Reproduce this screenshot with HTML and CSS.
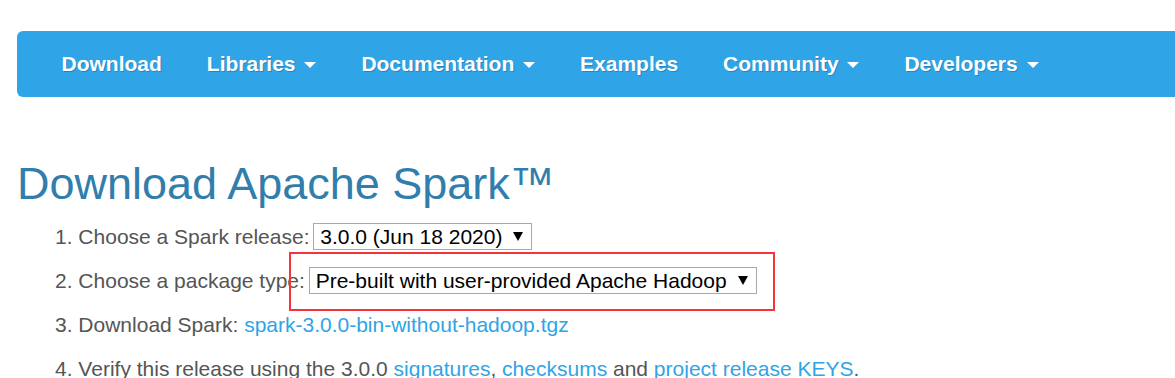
FILE: index.html
```html
<!DOCTYPE html>
<html lang="en">
<head>
  <meta charset="UTF-8" />
  <title>Downloads | Apache Spark</title>
  <link rel="stylesheet" href="styles.css">
</head>
<body>
  <div class="page">
    <nav class="navbar">
      <ul class="nav">
        <li><a href="#">Download</a></li>
        <li><a href="#">Libraries <span class="caret"></span></a></li>
        <li><a href="#">Documentation <span class="caret"></span></a></li>
        <li><a href="#">Examples</a></li>
        <li><a href="#">Community <span class="caret"></span></a></li>
        <li><a href="#">Developers <span class="caret"></span></a></li>
      </ul>
    </nav>

    <div class="content">
      <h1>Download Apache Spark™</h1>
      <ol class="steps">
        <li>Choose a Spark release: <span class="select release">3.0.0 (Jun 18 2020) <span class="arrow"></span></span></li>
        <li class="marked">Choose a package type: <span class="select package">Pre-built with user-provided Apache Hadoop <span class="arrow"></span></span><span class="highlight"></span></li>
        <li>Download Spark: <a href="#">spark-3.0.0-bin-without-hadoop.tgz</a></li>
        <li>Verify this release using the 3.0.0 <a href="#">signatures</a>, <a href="#">checksums</a> and <a href="#">project release KEYS</a>.</li>
      </ol>
    </div>
  </div>
</body>
</html>
```

FILE: styles.css
```css
html, body {
  margin: 0;
  padding: 0;
  overflow: hidden;
  background: #fff;
  font-family: 'Liberation Sans', Arial, sans-serif;
}

.page {
  width: 1240px;
  padding: 31px 0 0 17px;
}

.navbar {
  background-color: #2fa4e7;
  border-radius: 6px;
  height: 66px;
  display: flex;
  align-items: center;
}

.nav {
  list-style: none;
  margin: 0;
  padding: 0 0 0 22px;
  display: flex;
}

.nav a {
  display: block;
  padding: 0 22.5px;
  color: #fff;
  font-size: 21px;
  font-weight: bold;
  line-height: 30px;
  text-decoration: none;
  text-shadow: 1px 1px 0 rgba(0, 40, 80, 0.25);
}

.caret {
  display: inline-block;
  width: 0;
  height: 0;
  margin-left: 3px;
  vertical-align: middle;
  border-top: 6px solid #fff;
  border-left: 6px solid transparent;
  border-right: 6px solid transparent;
}

h1 {
  margin: 62px 0 13px;
  font-size: 45px;
  font-weight: normal;
  line-height: 1.1;
  color: #317eac;
}

.steps {
  margin: 0;
  padding: 0 0 0 38px;
  list-style-position: inside;
  color: #555;
  font-size: 21px;
  line-height: 30px;
}

.steps li {
  margin-bottom: 14px;
}

.steps a {
  color: #2fa4e7;
  text-decoration: none;
}

.select {
  display: inline-flex;
  align-items: center;
  gap: 11px;
  height: 25px;
  margin-left: -2px;
  padding: 0 8px 0 6px;
  border: 1px solid #a9a9a9;
  color: #000;
  line-height: 25px;
}

.arrow {
  width: 0;
  height: 0;
  border-top: 9px solid #000;
  border-left: 5px solid transparent;
  border-right: 5px solid transparent;
}

.marked {
  position: relative;
}

.highlight {
  position: absolute;
  left: 234px;
  top: -14px;
  width: 482px;
  height: 55px;
  border: 2px solid #f4343a;
}
```
